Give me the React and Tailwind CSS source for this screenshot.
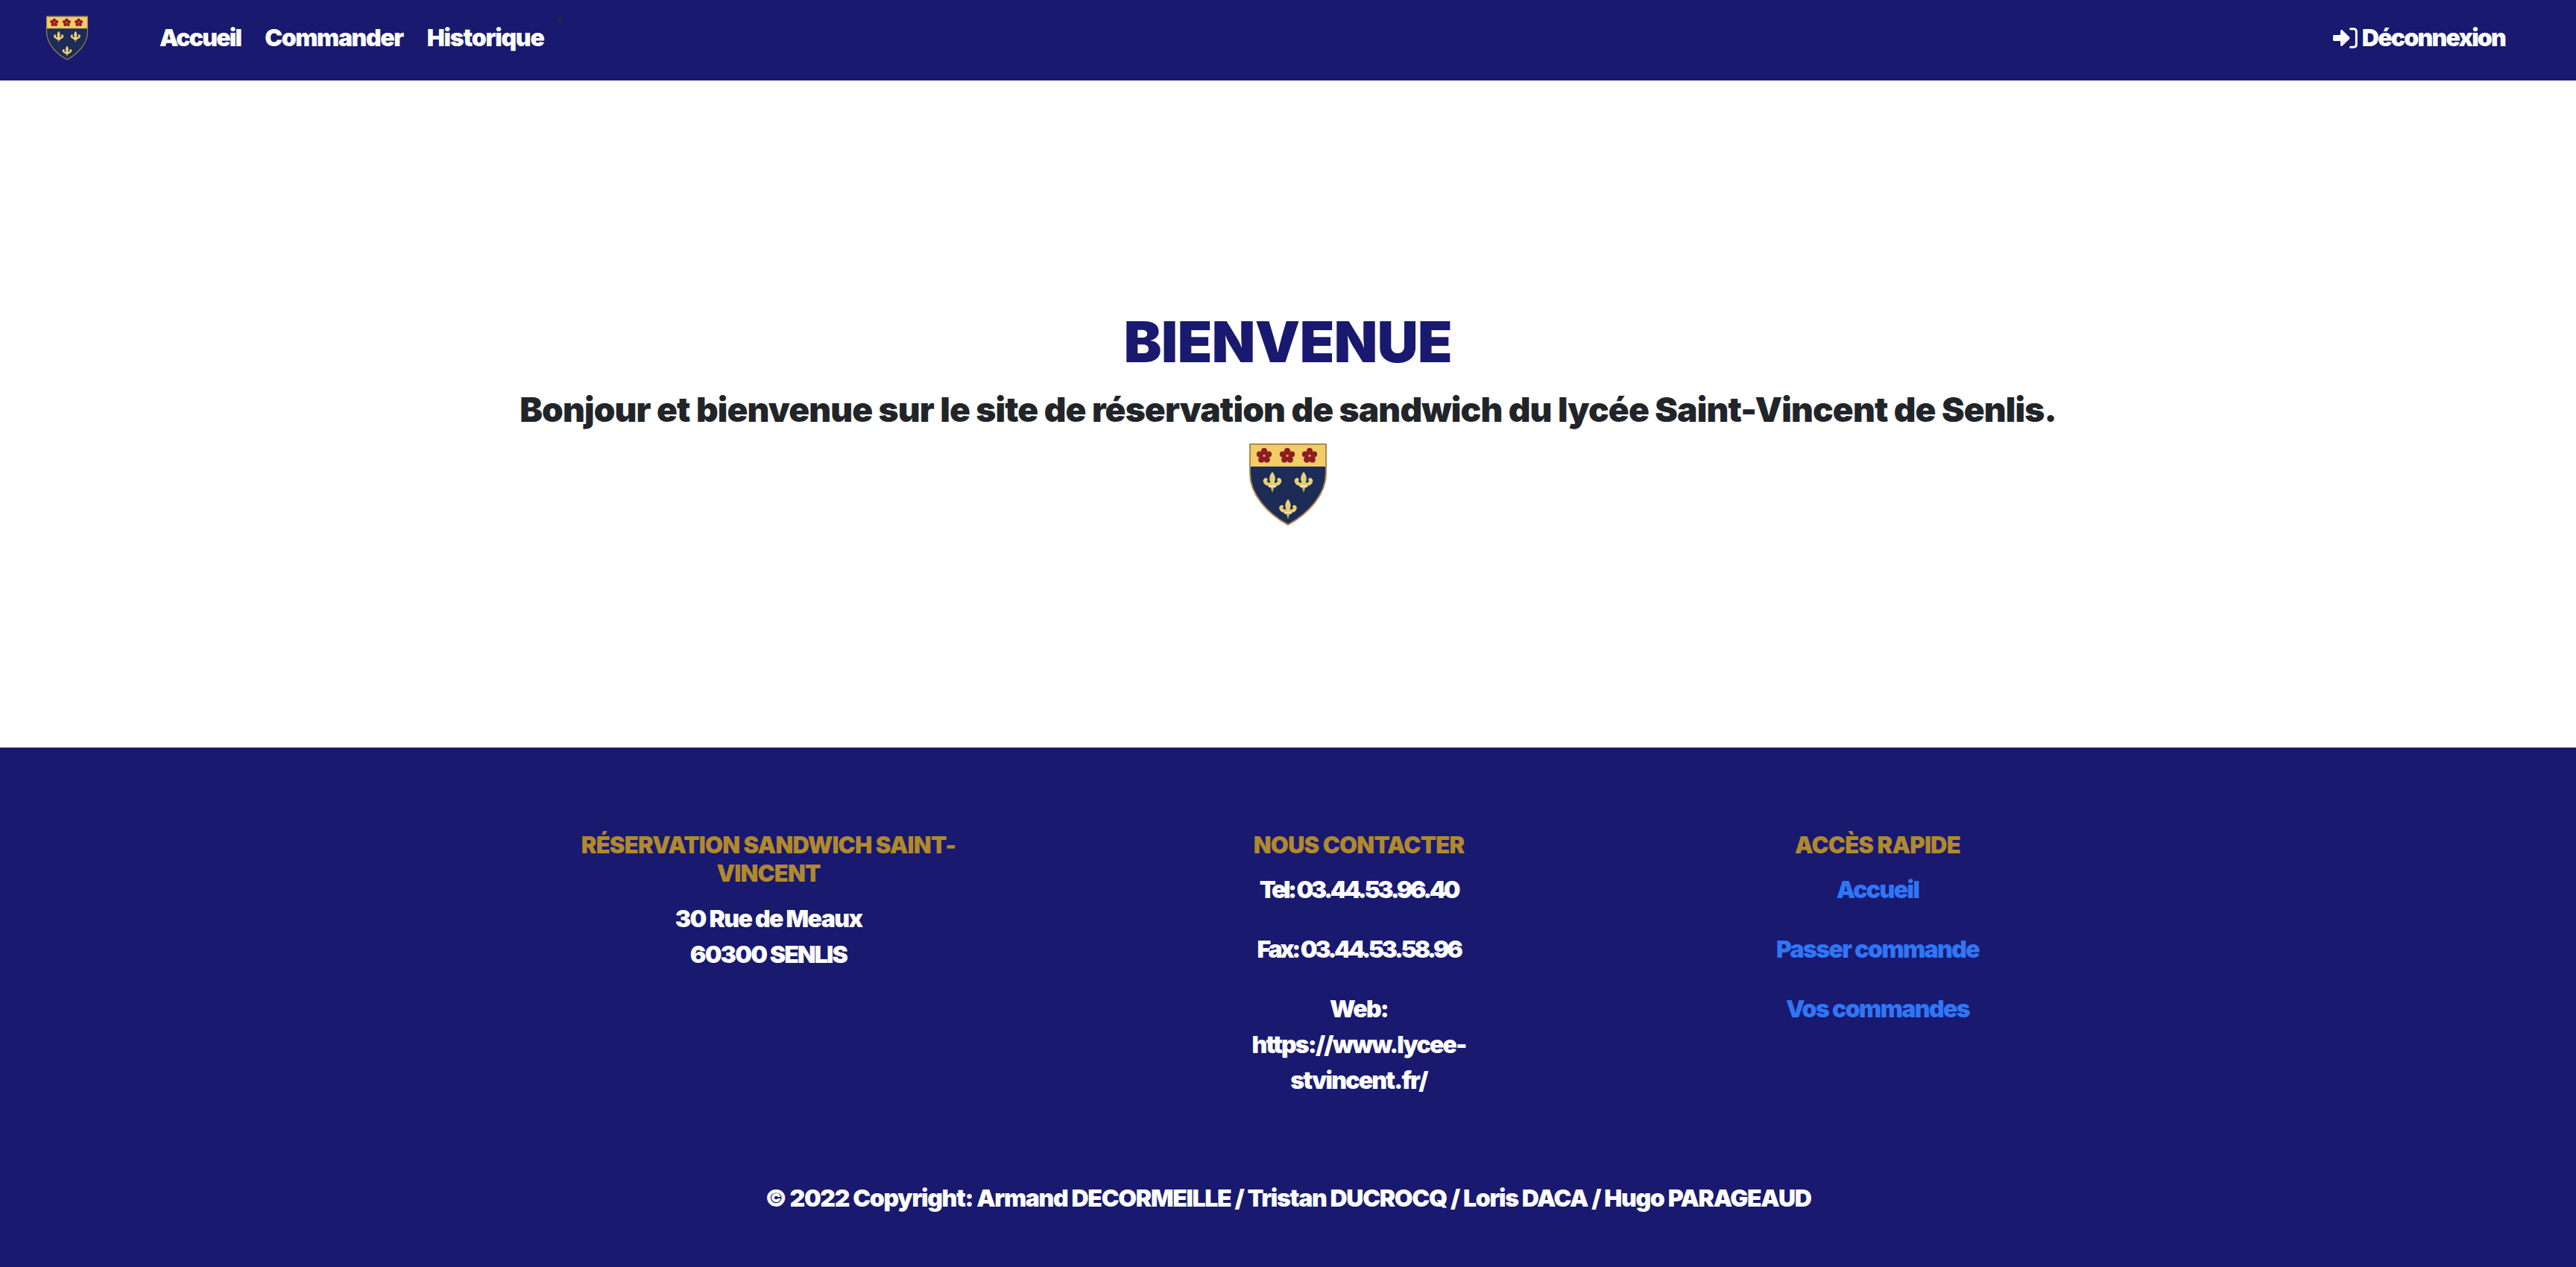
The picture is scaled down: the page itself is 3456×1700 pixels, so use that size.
import React from "react";

function Fleur({ x, y, s = 1 }) {
  return (
    <g transform={`translate(${x} ${y}) scale(${s})`}>
      <path d="M0 -13C3.5 -9 4 -5 2.6 -1.5L2.4 3.5L-2.4 3.5L-2.6 -1.5C-4 -5 -3.5 -9 0 -13Z" fill="#e9cf73" />
      <path d="M-2.4 3C-6 4 -9.5 2.5 -10.5 -1C-11.3 -4 -9 -6.5 -6.8 -5.6C-5 -4.8 -5 -2.6 -6.6 -2.2C-5.5 -0.5 -3.8 0 -2.2 -0.2Z" fill="#e9cf73" />
      <path d="M2.4 3C6 4 9.5 2.5 10.5 -1C11.3 -4 9 -6.5 6.8 -5.6C5 -4.8 5 -2.6 6.6 -2.2C5.5 -0.5 3.8 0 2.2 -0.2Z" fill="#e9cf73" />
      <rect x="-4.6" y="2.6" width="9.2" height="2.6" rx="1" fill="#f4e6a6" />
      <path d="M-2 5.2L2 5.2L0 11.5Z" fill="#cdb04f" />
    </g>
  );
}

function Rose({ x, y }) {
  return (
    <g transform={`translate(${x} ${y}) scale(1.15)`} fill="#8d1c24">
      <circle cx="0" cy="-5.6" r="3.5" />
      <circle cx="5.3" cy="-1.7" r="3.5" />
      <circle cx="3.3" cy="4.5" r="3.5" />
      <circle cx="-3.3" cy="4.5" r="3.5" />
      <circle cx="-5.3" cy="-1.7" r="3.5" />
      <circle cx="0" cy="0" r="3.6" />
      <circle cx="0" cy="0" r="1.5" fill="#d8a53f" />
    </g>
  );
}

function Shield({ className }) {
  return (
    <svg viewBox="0 0 104 110" className={className} aria-label="Blason">
      <path d="M1 1H103V40C103 68 80 94 52 109C24 94 1 68 1 40Z" fill="#1d2b57" stroke="#a98a55" strokeWidth="2" />
      <path d="M2 2H102V32H2Z" fill="#f2cd66" />
      <path d="M2 31.5H102" stroke="#1d2b57" strokeWidth="1" />
      <Rose x={20} y={16.5} />
      <Rose x={51} y={16.5} />
      <Rose x={81} y={16.5} />
      <Fleur x={31} y={53} s={1.15} />
      <Fleur x={73} y={53} s={1.15} />
      <Fleur x={52} y={89} s={1.1} />
    </svg>
  );
}

function LoginIcon() {
  return (
    <svg viewBox="0 0 33 28" className="h-[28px] w-[33px]" fill="none">
      <path d="M1.5 10H10V4.6C10 3.2 11.6 2.6 12.6 3.5L21.8 12.4C22.7 13.3 22.7 14.7 21.8 15.6L12.6 24.5C11.6 25.4 10 24.8 10 23.4V18H1.5C0.6 18 0 17.4 0 16.5V11.5C0 10.6 0.6 10 1.5 10Z" fill="#fff" />
      <path d="M23.5 1.8H27.5C30 1.8 31.3 3.2 31.3 5.5V22.5C31.3 24.8 30 26.2 27.5 26.2H23.5" stroke="#fff" strokeWidth="3" strokeLinecap="round" />
    </svg>
  );
}

function Column({ title, className, children }) {
  return (
    <div className={className}>
      <h6 className="m-0 mb-[17px] text-[31px] leading-[38.4px] font-black uppercase tracking-[-0.8px] text-[#b0892c]">{title}</h6>
      {children}
    </div>
  );
}

export default function App() {
  return (
    <div className="min-h-[1700px] bg-white text-[32px] leading-[48px] font-black tracking-[-1.6px] [font-family:Inter,'Noto_Sans',sans-serif]">
      <nav className="relative flex h-[108px] items-center bg-[#191970] pb-[6px] pl-[62px] pr-[95px] text-white">
        <Shield className="h-[60px] w-[56px]" />
        <a className="ml-[96px] tracking-[-1.8px]">Accueil</a>
        <a className="ml-[32px] tracking-[-1.4px]">Commander</a>
        <a className="ml-[32px] tracking-[-1.2px]">Historique</a>
        <span className="absolute left-[749px] top-[22px] h-[9px] w-[4px] rounded-[1px] bg-[#23283a]" />
        <a className="ml-auto flex items-center gap-[6px] tracking-[-1.8px]">
          <LoginIcon />
          Déconnexion
        </a>
      </nav>

      <main className="flex h-[895px] flex-col items-center pt-[302px] text-center">
        <h1 className="m-0 text-[76px] leading-[96px] font-black tracking-[-0.5px] text-[#191970]">BIENVENUE</h1>
        <h4 className="m-0 mt-[14px] text-[46px] leading-[58px] font-black tracking-[-0.85px] text-[#212529]">
          Bonjour et bienvenue sur le site de réservation de sandwich du lycée Saint-Vincent de Senlis.
        </h4>
        <Shield className="mt-[17px] h-[110px] w-[104px]" />
      </main>

      <footer className="h-[697px] bg-[#191970] text-center text-white">
        <div className="flex pl-[751px] pt-[112px]">
          <Column title="Réservation sandwich Saint-Vincent" className="w-[560px]">
            <p className="m-0 tracking-[-1.6px]">30 Rue de Meaux</p>
            <p className="m-0 tracking-[-1.8px]">60300 SENLIS</p>
          </Column>
          <Column title="Nous contacter" className="ml-[362px] w-[300px]">
            <p className="m-0 mb-[32px] tracking-[-3.4px]">Tel: 03.44.53.96.40</p>
            <p className="m-0 mb-[32px] tracking-[-3.4px]">Fax: 03.44.53.58.96</p>
            <p className="m-0 tracking-[-1.8px]">
              Web:
              <br />
              https://www.lycee-stvincent.fr/
            </p>
          </Column>
          <Column title="Accès rapide" className="ml-[396px] w-[300px]">
            <p className="m-0 mb-[32px] text-[#2f76f6]">Accueil</p>
            <p className="m-0 mb-[32px] text-[#2f76f6]">Passer commande</p>
            <p className="m-0 text-[#2f76f6]">Vos commandes</p>
          </Column>
        </div>
        <p className="m-0 mt-[110px] tracking-[-1.3px]">© 2022 Copyright: Armand DECORMEILLE / Tristan DUCROCQ / Loris DACA / Hugo PARAGEAUD</p>
      </footer>
    </div>
  );
}
